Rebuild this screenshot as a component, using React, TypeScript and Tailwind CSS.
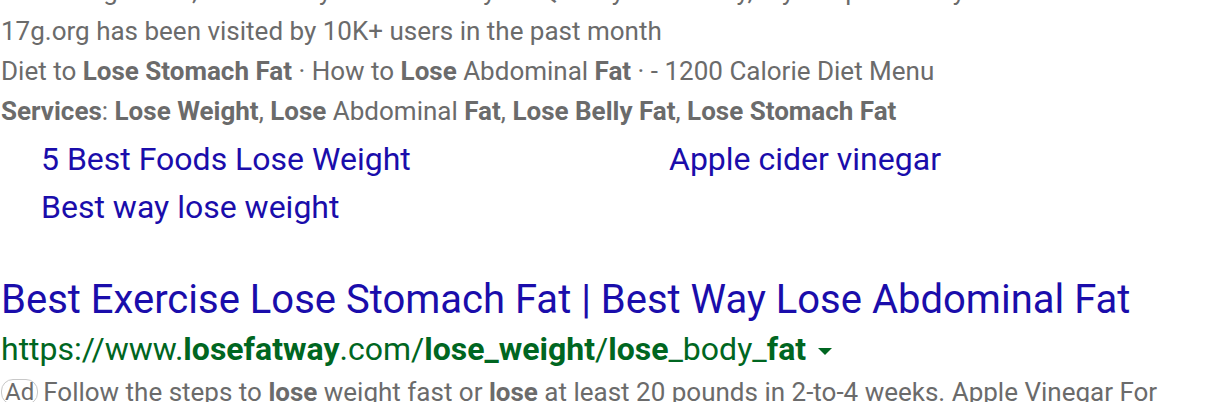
import React from 'react';

const gray = 'text-[#6b6b6b]';

const sitelinks = ['5 Best Foods Lose Weight', 'Apple cider vinegar', 'Best way lose weight'];

const App: React.FC = () => {
  return (
    <div className="h-[402px] w-[1216px] overflow-hidden bg-white font-['Roboto',sans-serif]">
      <div className="pl-px text-[26px] leading-[40px]">
        {/* cut off line from the ad above */}
        <div className={`-mt-[29px] whitespace-nowrap ${gray}`}>
          Lose weight fast, Eat healthy and lose belly fat Quickly and safely, Try our plan today
        </div>
        <div className={gray}>17g.org has been visited by 10K+ users in the past month</div>
        <div className={gray}>
          Diet to <b>Lose Stomach Fat</b> · How to <b>Lose</b> Abdominal <b>Fat</b> · - 1200 Calorie Diet Menu
        </div>
        <div className={gray}>
          <b>Services</b>: <b>Lose Weight</b>, <b>Lose</b> Abdominal <b>Fat</b>, <b>Lose Belly Fat</b>, <b>Lose Stomach Fat</b>
        </div>
      </div>

      {/* Sitelinks */}
      <div className="mt-[4px] grid w-[1216px] grid-cols-[628px_1fr] pl-[41px] text-[32px] leading-[48px] text-[#1a0dab]">
        {sitelinks.map((s) => (
          <a key={s} href="#" className="w-fit">
            {s}
          </a>
        ))}
      </div>

      {/* Next ad */}
      <div className="mt-[45px] pl-px">
        <a href="#" className="block whitespace-nowrap text-[40px] leading-[48px] text-[#1a0dab]">
          Best Exercise Lose Stomach Fat | Best Way Lose Abdominal Fat
        </a>
        <div className="flex items-center text-[32px] leading-[50px] text-[#006621]">
          <span className="whitespace-nowrap">
            https://www.<b>losefatway</b>.com/<b>lose_weight</b>/<b>lose</b>_body_<b>fat</b>
          </span>
          <span className="ml-[12px] mt-[4px] h-0 w-0 border-x-[7px] border-t-[7px] border-x-transparent border-t-[#006621]" />
        </div>
        <div className={`flex items-center text-[26px] leading-[36px] ${gray}`}>
          <span className="mr-[5px] rounded-[12px] border border-[#c8c8c8] px-[3px] text-[24px] leading-[24px]">Ad</span>
          <span className="whitespace-nowrap">
            Follow the steps to <b>lose</b> weight fast or <b>lose</b> at least 20 pounds in 2-to-4 weeks. Apple Vinegar For
          </span>
        </div>
      </div>
    </div>
  );
};

export default App;
